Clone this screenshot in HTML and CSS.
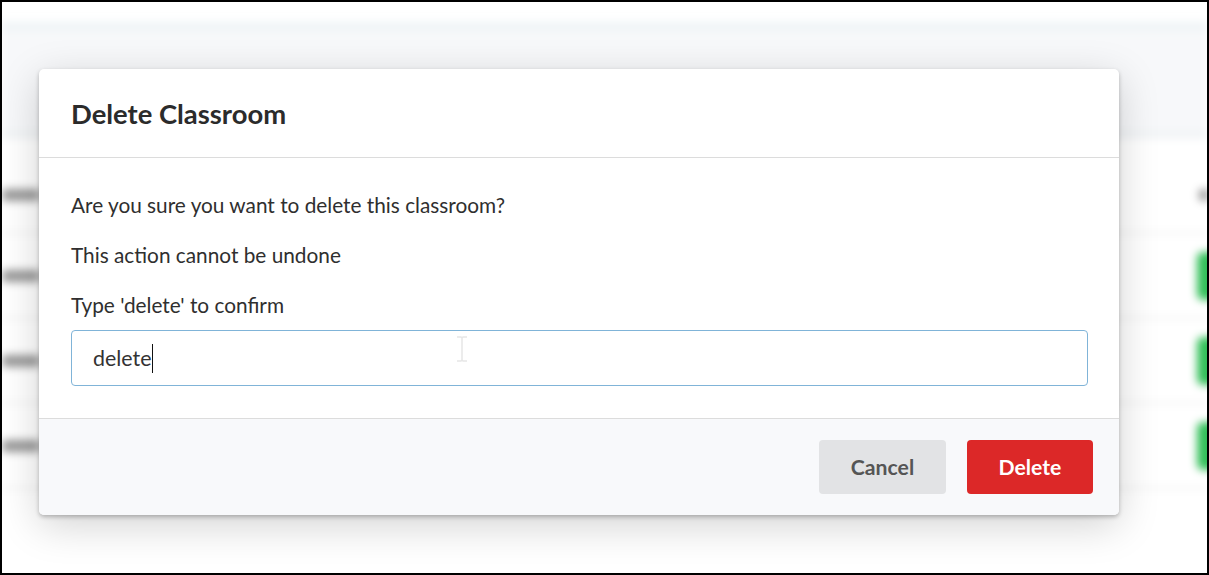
FILE: index.html
```html
<!DOCTYPE html>
<html lang="en">

<head>
    <meta charset="UTF-8">
    <meta name="viewport" content="width=device-width, initial-scale=1.0">
    <title>Delete Classroom</title>
    <link rel="stylesheet" href="styles.css">
</head>

<body>
    <div class="frame">
        <div class="page">
            <div class="topbar"></div>
            <div class="toolbar"></div>
            <div class="table">
                <div class="row head">
                    <span class="blob"></span>
                    <span class="blob small"></span>
                </div>
                <div class="row">
                    <span class="blob"></span>
                    <span class="badge"></span>
                </div>
                <div class="row">
                    <span class="blob"></span>
                    <span class="badge"></span>
                </div>
                <div class="row">
                    <span class="blob"></span>
                    <span class="badge"></span>
                </div>
            </div>
        </div>

        <div class="overlay">
            <div class="modal">
                <div class="modal-header">
                    <h2>Delete Classroom</h2>
                </div>
                <div class="modal-body">
                    <p>Are you sure you want to delete this classroom?</p>
                    <p>This action cannot be undone</p>
                    <p class="label">Type 'delete' to confirm</p>
                    <div class="field">
                        <span>delete</span><span class="caret"></span>
                        <svg class="ibeam" width="14" height="26" viewBox="0 0 14 26">
                            <path d="M2 1h4l1 1 1-1h4M7 2v22M2 25h4l1-1 1 1h4" fill="none" stroke="#e6e6e6" stroke-width="1.5"/>
                        </svg>
                    </div>
                </div>
                <div class="modal-footer">
                    <button class="btn cancel">Cancel</button>
                    <button class="btn danger">Delete</button>
                </div>
            </div>
        </div>
    </div>
</body>

</html>
```

FILE: styles.css
```css
body {
    margin: 0;
    font-family: 'Lato', 'Open Sans', sans-serif;
    background: #fff;
}

.frame {
    position: relative;
    width: 1209px;
    height: 575px;
    box-sizing: border-box;
    border: 2px solid #000;
    overflow: hidden;
}

/* blurred page behind the dialog */
.page {
    position: absolute;
    inset: 0;
    background: #fff;
    filter: blur(4px);
}

.topbar {
    height: 20px;
    background: #fff;
    border-bottom: 8px solid #eef3f6;
}

.toolbar {
    height: 102px;
    background: #f7f8fa;
    border-bottom: 6px solid #eef2f4;
}

.table {
    margin-top: 20px;
}

.row {
    display: flex;
    justify-content: space-between;
    align-items: center;
    height: 83px;
    border-bottom: 2px solid #eeeeee;
}

.row.head {
    height: 74px;
}

.blob {
    width: 38px;
    height: 12px;
    border-radius: 4px;
    background: #9a9a9a;
}

.blob.small {
    width: 10px;
    margin-right: -2px;
}

.badge {
    width: 40px;
    height: 48px;
    margin-right: -30px;
    border-radius: 6px;
    background: #34c05a;
}

/* dialog */
.overlay {
    position: absolute;
    inset: 0;
    padding: 67px 0 0 37px;
}

.modal {
    width: 1080px;
    background: #fff;
    border-radius: 5px;
    overflow: hidden;
    box-shadow: 0 2px 4px rgba(0, 0, 0, 0.25), 0 10px 40px rgba(0, 0, 0, 0.18);
}

.modal-header {
    height: 88px;
    display: flex;
    align-items: center;
    padding: 0 32px;
    border-bottom: 1px solid #dcdcdc;
}

.modal-header h2 {
    margin: 0;
    font-size: 27.4px;
    font-weight: bold;
    color: #2b2b2b;
}

.modal-body {
    padding: 32px 31px 32px 32px;
}

.modal-body p {
    margin: 0 0 20px;
    font-size: 20.8px;
    line-height: 30px;
    color: #2f2f2f;
}

.modal-body p.label {
    margin-bottom: 10px;
}

.field {
    position: relative;
    display: flex;
    align-items: center;
    height: 54px;
    padding: 0 21px;
    border: 1px solid #80b4d8;
    border-radius: 4px;
    font-size: 21.4px;
    color: #333;
}

.caret {
    width: 1px;
    height: 29px;
    margin-left: 1px;
    background: #111;
}

.ibeam {
    position: absolute;
    left: 383px;
    top: 5px;
}

.modal-footer {
    display: flex;
    justify-content: flex-end;
    gap: 21px;
    padding: 21px 26px 21px 0;
    background: #f8f9fb;
    border-top: 1px solid #dcdcdc;
}

.btn {
    width: 127px;
    height: 54px;
    border: none;
    border-radius: 4px;
    font-family: 'Lato', sans-serif;
    font-size: 21.2px;
    font-weight: bold;
    cursor: pointer;
}

.btn.cancel {
    background: #e2e3e5;
    color: #555;
}

.btn.danger {
    width: 126px;
    background: #dc2828;
    color: #fff;
}
```
